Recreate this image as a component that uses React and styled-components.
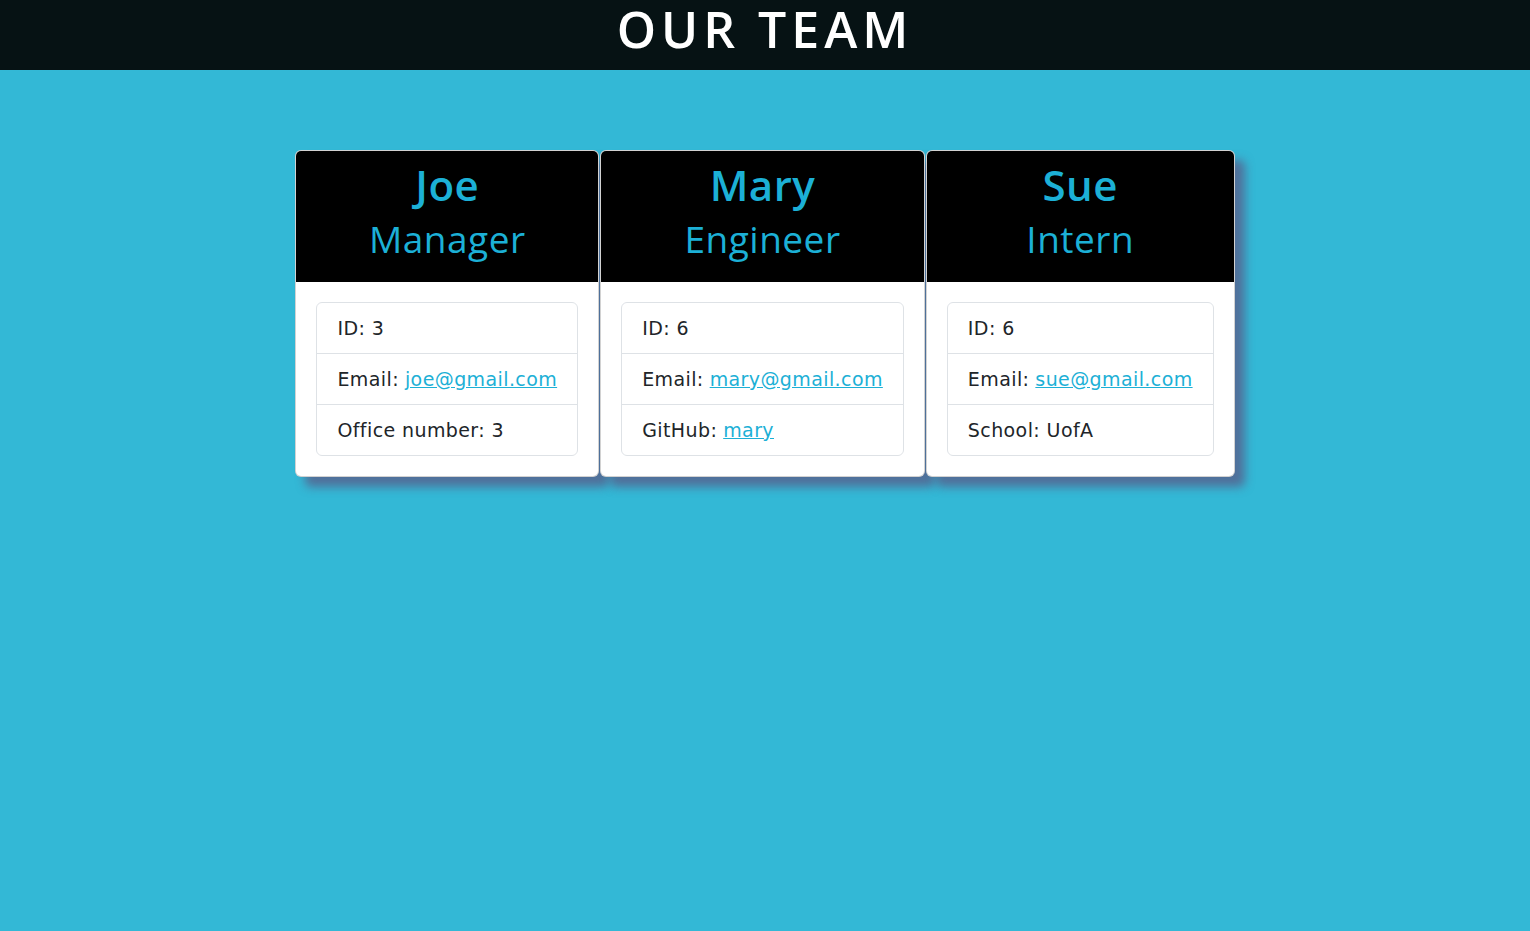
import React from 'react';
import styled, { createGlobalStyle } from 'styled-components';

const GlobalStyle = createGlobalStyle`
    html, body {
        margin: 0;
        padding: 0;
        height: 100%;
        background: #33b8d6;
        font-family: "DejaVu Sans", "Open Sans", sans-serif;
    }
`;

const Header = styled.header`
    height: 70px;
    background-color: #061214;
    display: flex;
    justify-content: center;
    align-items: flex-start;

    h1{
        margin: 0;
        color: #fff;
        font-family: "Open Sans", sans-serif;
        font-size: 50px;
        font-weight: 600;
        letter-spacing: 5px;
        line-height: 58px;
    }
`;

const Main = styled.main`
    display: flex;
    justify-content: center;
    align-items: flex-start;
    gap: 1px;
    padding-top: 80px;
`;

const Card = styled.div`
    background: #fff;
    border: 1px solid rgba(0,0,0,.175);
    border-radius: 6px;
    overflow: hidden;
    box-shadow: 10px 10px 10px rgba(100, 65, 115, 0.6);
`;

const CardHeader = styled.div`
    background: #000;
    color: #1cb0d6;
    text-align: center;
    height: 131px;
    box-sizing: border-box;
    padding-top: 9px;
    font-family: "Open Sans", sans-serif;

    h2{
        margin: 0;
        font-size: 42px;
        font-weight: 600;
        line-height: 50px;
        letter-spacing: 0.5px;
    }

    h3{
        margin: 0;
        font-size: 37px;
        font-weight: 400;
        line-height: 58px;
        letter-spacing: 0.5px;
    }
`;

const CardBody = styled.div`
    padding: 20px;
`;

const List = styled.ul`
    list-style: none;
    margin: 0;
    padding: 0;
    border: 1px solid #dee2e6;
    border-radius: 6px;
`;

const Item = styled.li`
    padding: 0 20px;
    height: 50px;
    display: flex;
    align-items: center;
    font-size: 19px;
    letter-spacing: 0.4px;
    color: #212529;
    white-space: nowrap;

    & + &{
        border-top: 1px solid #dee2e6;
    }

    a{
        color: #1cb0d6;
        text-decoration: underline;
        margin-left: 6px;
    }
`;

const team = [
    {name: 'Joe', role: 'Manager', id: 3, email: 'joe@gmail.com', extra: {label: 'Office number', value: '3'}},
    {name: 'Mary', role: 'Engineer', id: 6, email: 'mary@gmail.com', extra: {label: 'GitHub', value: 'mary', link: true}},
    {name: 'Sue', role: 'Intern', id: 6, email: 'sue@gmail.com', extra: {label: 'School', value: 'UofA'}},
];

const App = () => {
    return(
        <>
            <GlobalStyle />
            <Header>
                <h1>OUR TEAM</h1>
            </Header>
            <Main>
                {team.map((m) => (
                    <Card key={m.name}>
                        <CardHeader>
                            <h2>{m.name}</h2>
                            <h3>{m.role}</h3>
                        </CardHeader>
                        <CardBody>
                            <List>
                                <Item>ID: {m.id}</Item>
                                <Item>Email:<a href={`mailto:${m.email}`}>{m.email}</a></Item>
                                <Item>
                                    {m.extra.label}:
                                    {m.extra.link
                                        ? <a href={`https://github.com/${m.extra.value}`}>{m.extra.value}</a>
                                        : ` ${m.extra.value}`}
                                </Item>
                            </List>
                        </CardBody>
                    </Card>
                ))}
            </Main>
        </>
    );
}

export default App;
